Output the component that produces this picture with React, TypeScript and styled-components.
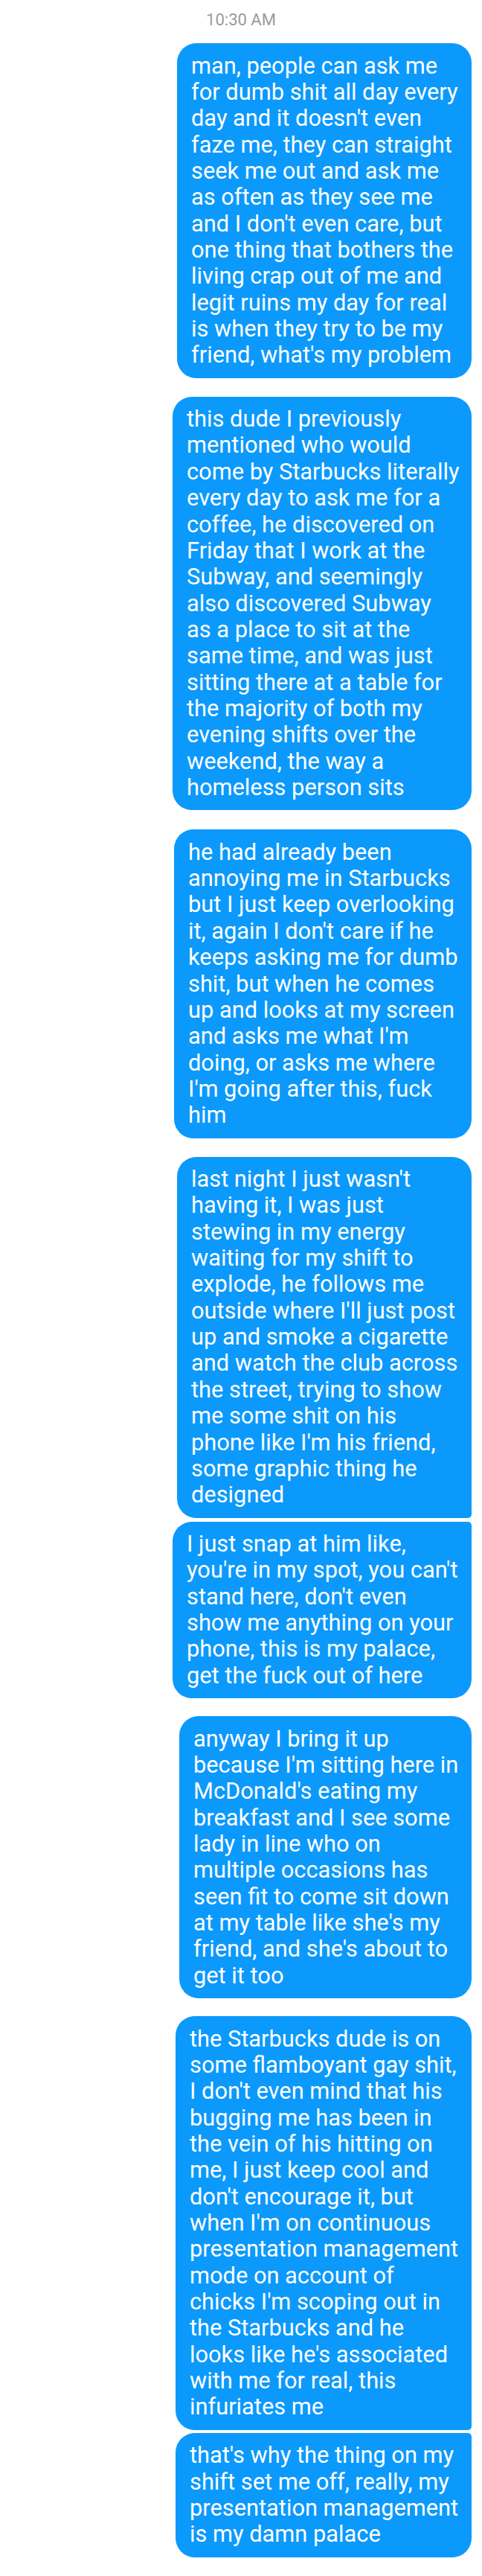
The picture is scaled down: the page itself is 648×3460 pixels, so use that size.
import React from "react";
import styled, { createGlobalStyle } from "styled-components";

const GlobalStyle = createGlobalStyle`
  html, body {
    margin: 0;
    padding: 0;
    background: #ffffff;
  }
  body {
    font-family: Roboto, "Noto Sans", "Liberation Sans", sans-serif;
    -webkit-font-smoothing: antialiased;
  }
`;

const Thread = styled.main`
  display: flex;
  flex-direction: column;
  align-items: flex-end;
  width: 648px;
  box-sizing: border-box;
  padding: 14px 14px 0 0;
`;

const Timestamp = styled.div`
  align-self: stretch;
  padding-left: 14px;
  text-align: center;
  font-size: 22px;
  line-height: 26px;
  color: #9b9b9b;
`;

const Bubble = styled.div<{
  $width: number;
  $gap: number;
  $joinTop?: boolean;
  $joinBottom?: boolean;
}>`
  box-sizing: border-box;
  width: ${(p) => p.$width}px;
  margin-top: ${(p) => p.$gap}px;
  padding: 12.5px 10px 13px 19px;
  background: #0c99fc;
  color: #ffffff;
  font-size: 30.8px;
  line-height: 35.35px;
  white-space: pre;
  border-radius: 26px ${(p) => (p.$joinTop ? "5px" : "26px")}
    ${(p) => (p.$joinBottom ? "5px" : "26px")} 26px;
`;

type Message = {
  width: number;
  gap: number;
  joinTop?: boolean;
  joinBottom?: boolean;
  lines: string[];
};

const messages: Message[] = [
  {
    width: 396,
    gap: 18,
    lines: [
      "man, people can ask me",
      "for dumb shit all day every",
      "day and it doesn't even",
      "faze me, they can straight",
      "seek me out and ask me",
      "as often as they see me",
      "and I don't even care, but",
      "one thing that bothers the",
      "living crap out of me and",
      "legit ruins my day for real",
      "is when they try to be my",
      "friend, what's my problem",
    ],
  },
  {
    width: 402,
    gap: 25,
    lines: [
      "this dude I previously",
      "mentioned who would",
      "come by Starbucks literally",
      "every day to ask me for a",
      "coffee, he discovered on",
      "Friday that I work at the",
      "Subway, and seemingly",
      "also discovered Subway",
      "as a place to sit at the",
      "same time, and was just",
      "sitting there at a table for",
      "the majority of both my",
      "evening shifts over the",
      "weekend, the way a",
      "homeless person sits",
    ],
  },
  {
    width: 400,
    gap: 26,
    lines: [
      "he had already been",
      "annoying me in Starbucks",
      "but I just keep overlooking",
      "it, again I don't care if he",
      "keeps asking me for dumb",
      "shit, but when he comes",
      "up and looks at my screen",
      "and asks me what I'm",
      "doing, or asks me where",
      "I'm going after this, fuck",
      "him",
    ],
  },
  {
    width: 396,
    gap: 25,
    joinBottom: true,
    lines: [
      "last night I just wasn't",
      "having it, I was just",
      "stewing in my energy",
      "waiting for my shift to",
      "explode, he follows me",
      "outside where I'll just post",
      "up and smoke a cigarette",
      "and watch the club across",
      "the street, trying to show",
      "me some shit on his",
      "phone like I'm his friend,",
      "some graphic thing he",
      "designed",
    ],
  },
  {
    width: 402,
    gap: 5,
    joinTop: true,
    lines: [
      "I just snap at him like,",
      "you're in my spot, you can't",
      "stand here, don't even",
      "show me anything on your",
      "phone, this is my palace,",
      "get the fuck out of here",
    ],
  },
  {
    width: 393,
    gap: 24,
    lines: [
      "anyway I bring it up",
      "because I'm sitting here in",
      "McDonald's eating my",
      "breakfast and I see some",
      "lady in line who on",
      "multiple occasions has",
      "seen fit to come sit down",
      "at my table like she's my",
      "friend, and she's about to",
      "get it too",
    ],
  },
  {
    width: 398,
    gap: 24,
    joinBottom: true,
    lines: [
      "the Starbucks dude is on",
      "some flamboyant gay shit,",
      "I don't even mind that his",
      "bugging me has been in",
      "the vein of his hitting on",
      "me, I just keep cool and",
      "don't encourage it, but",
      "when I'm on continuous",
      "presentation management",
      "mode on account of",
      "chicks I'm scoping out in",
      "the Starbucks and he",
      "looks like he's associated",
      "with me for real, this",
      "infuriates me",
    ],
  },
  {
    width: 398,
    gap: 4,
    joinTop: true,
    lines: [
      "that's why the thing on my",
      "shift set me off, really, my",
      "presentation management",
      "is my damn palace",
    ],
  },
];

export default function App() {
  return (
    <>
      <GlobalStyle />
      <Thread>
        <Timestamp>10:30 AM</Timestamp>
        {messages.map((m, i) => (
          <Bubble
            key={i}
            $width={m.width}
            $gap={m.gap}
            $joinTop={m.joinTop}
            $joinBottom={m.joinBottom}
          >
            {m.lines.join("\n")}
          </Bubble>
        ))}
      </Thread>
    </>
  );
}
